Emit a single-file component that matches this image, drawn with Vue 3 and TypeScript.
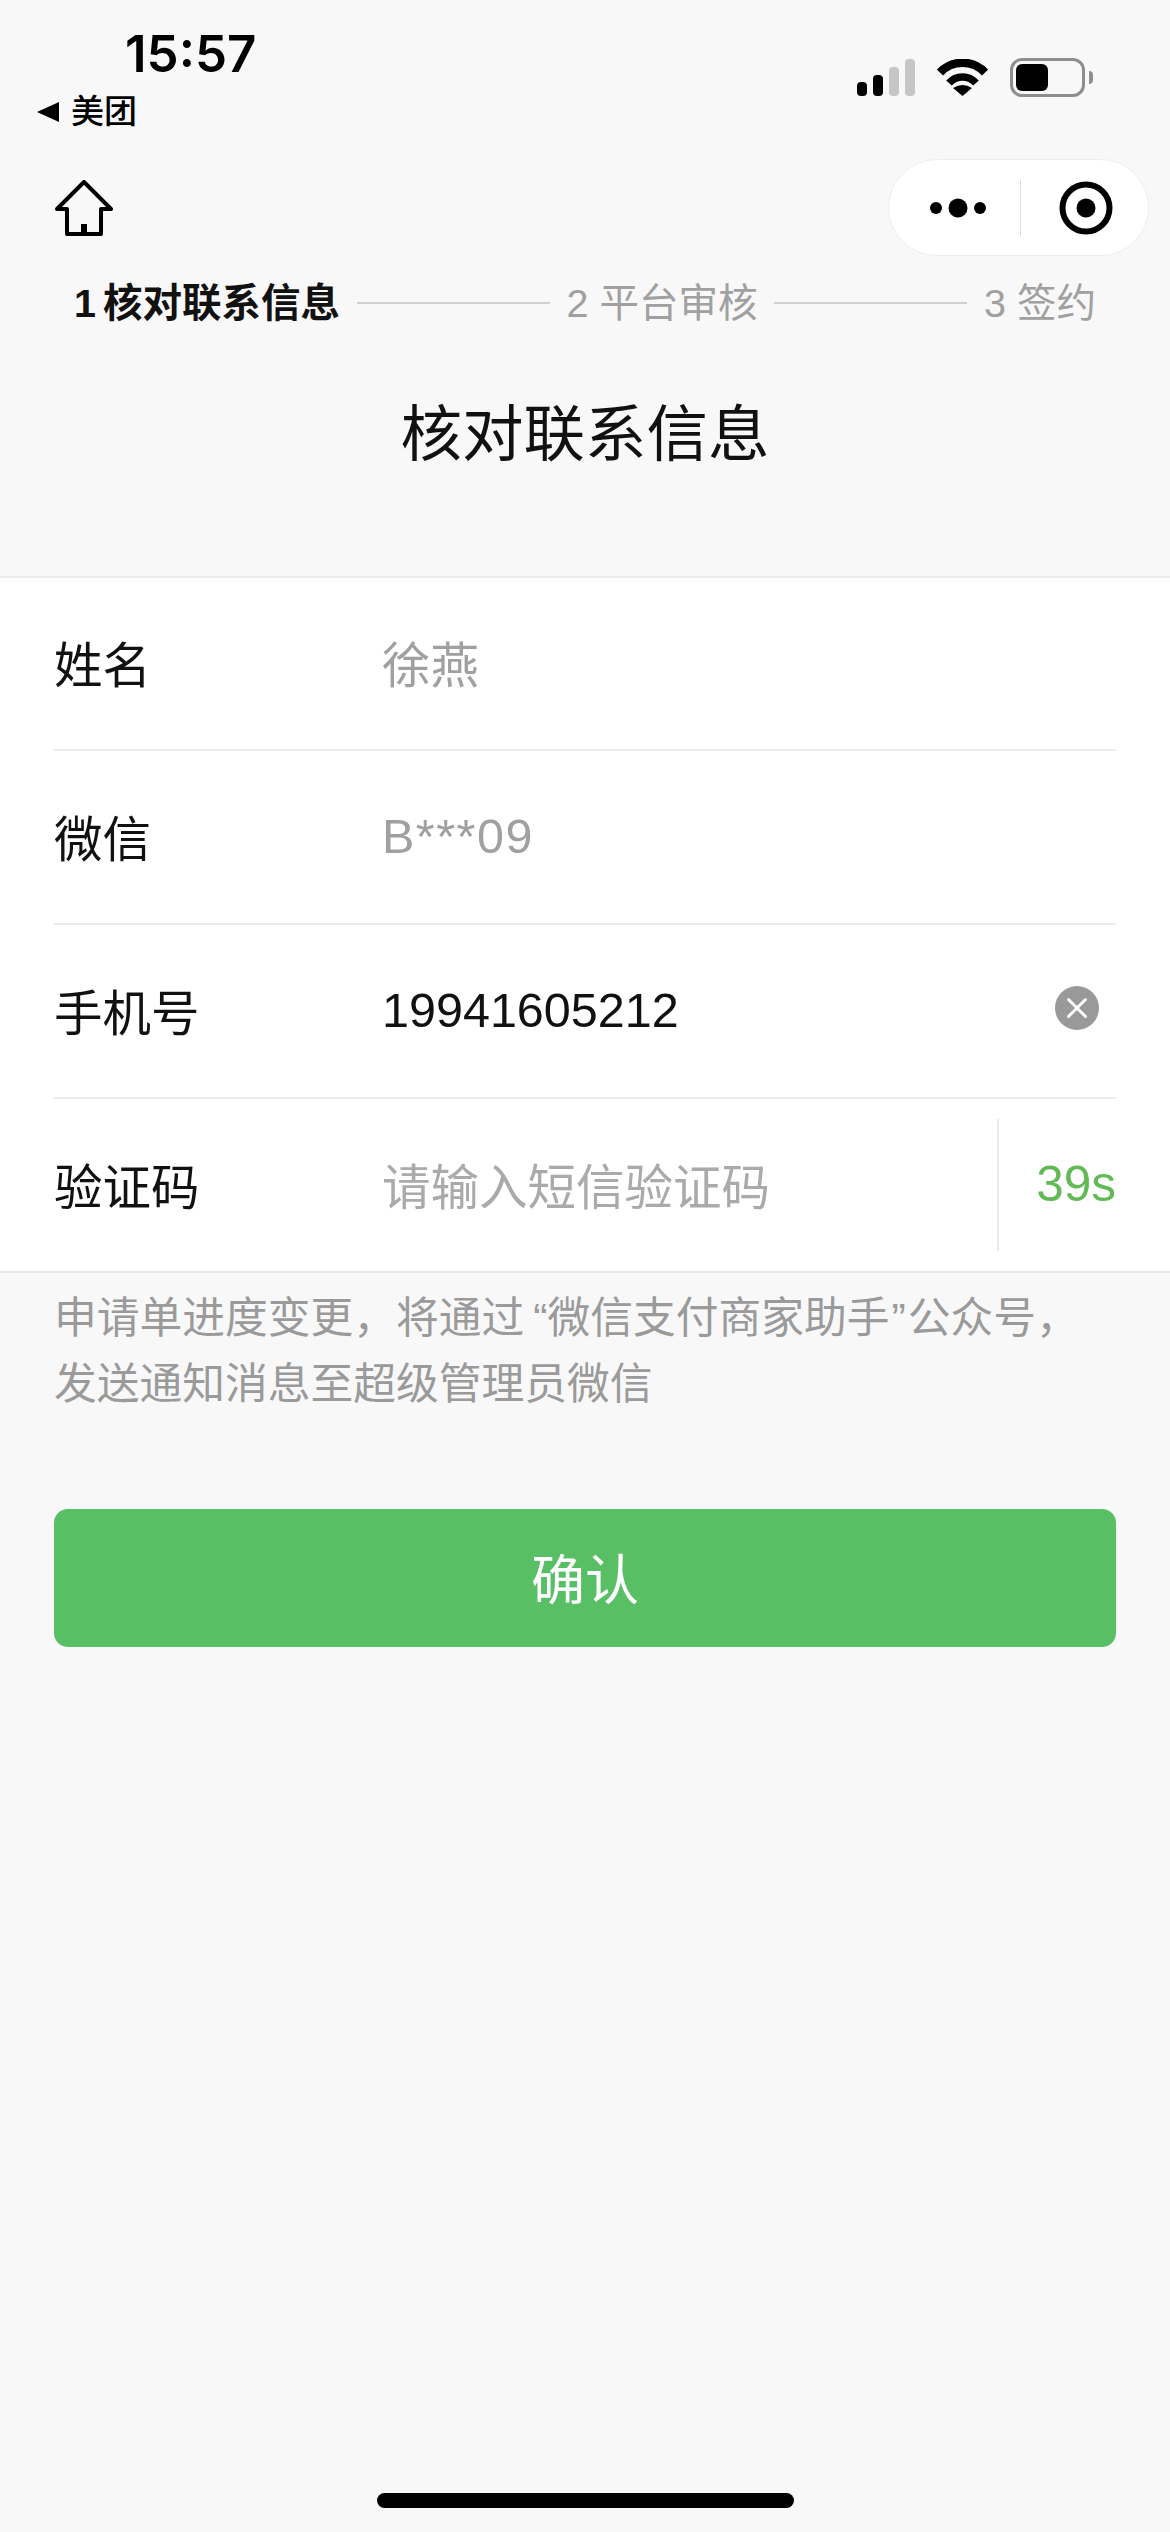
<script setup lang="ts">
interface Step { label: string; active?: boolean }
const steps: Step[] = [
  { label: '1 核对联系信息', active: true },
  { label: '2 平台审核' },
  { label: '3 签约' },
]
</script>

<template>
  <div class="page">
    <header class="status">
      <div class="status-left">
        <div class="time">15:57</div>
        <div class="back"><i class="back-arrow"></i><span>美团</span></div>
      </div>
      <div class="status-right">
        <svg class="signal" width="58" height="37" viewBox="0 0 58 37">
          <rect x="0" y="23" width="10" height="14" rx="4" fill="#000" />
          <rect x="16" y="16" width="10" height="21" rx="4" fill="#000" />
          <rect x="32" y="8" width="10" height="29" rx="4" fill="#c6c6c6" />
          <rect x="48" y="0" width="10" height="37" rx="4" fill="#c6c6c6" />
        </svg>
        <svg class="wifi" width="51" height="37" viewBox="0 0 51 37">
          <path d="M3 13.5 A31 31 0 0 1 48 13.5" fill="none" stroke="#000" stroke-width="8.5" />
          <path d="M12 24 A18 18 0 0 1 39 24" fill="none" stroke="#000" stroke-width="7.5" />
          <path d="M16 29 Q25.5 23 35 29 L25.5 37 Z" fill="#000" />
        </svg>
        <div class="battery"><div class="battery-fill"></div></div>
        <i class="battery-tip"></i>
      </div>
    </header>

    <nav class="nav">
      <svg class="home" width="58" height="56" viewBox="0 0 58 56">
        <path
          d="M29 2 L56 29 H46 V54 H12 V29 H2 Z"
          fill="none"
          stroke="#000"
          stroke-width="4"
          stroke-linejoin="round"
        />
        <rect x="26" y="44" width="6" height="10" fill="#000" />
      </svg>
      <div class="capsule">
        <svg width="56" height="20" viewBox="0 0 56 20" class="more">
          <circle cx="6" cy="10" r="6" fill="#000" />
          <circle cx="28" cy="10" r="9.5" fill="#000" />
          <circle cx="50" cy="10" r="6" fill="#000" />
        </svg>
        <i class="capsule-divider"></i>
        <svg width="54" height="54" viewBox="0 0 54 54" class="target">
          <circle cx="27" cy="27" r="23.5" fill="none" stroke="#000" stroke-width="6" />
          <circle cx="27" cy="27" r="9.5" fill="#000" />
        </svg>
      </div>
    </nav>

    <div class="steps">
      <template v-for="(step, i) in steps" :key="step.label">
        <span class="step" :class="{ active: step.active }">{{ step.label }}</span>
        <i v-if="i < steps.length - 1" class="step-line"></i>
      </template>
    </div>

    <h1 class="title">核对联系信息</h1>

    <section class="panel">
      <div class="row first">
        <span class="label">姓名</span>
        <span class="value muted">徐燕</span>
      </div>
      <div class="row">
        <span class="label">微信</span>
        <span class="value muted wechat">B***09</span>
      </div>
      <div class="row">
        <span class="label">手机号</span>
        <span class="value">19941605212</span>
        <svg class="clear" width="44" height="44" viewBox="0 0 44 44">
          <circle cx="22" cy="22" r="22" fill="#999" />
          <path d="M13.5 13.5 L30.5 30.5 M30.5 13.5 L13.5 30.5" stroke="#fff" stroke-width="3" stroke-linecap="round" />
        </svg>
      </div>
      <div class="row last">
        <span class="label">验证码</span>
        <span class="value placeholder">请输入短信验证码</span>
        <i class="row-divider"></i>
        <span class="code">39s</span>
      </div>
    </section>

    <p class="note">申请单进度变更，将通过<span class="quote-open">“</span>微信支付商家助手<span class="quote-close">”</span>公众号，<br />发送通知消息至超级管理员微信</p>

    <button class="confirm" type="button">确认</button>

    <div class="indicator"></div>
  </div>
</template>

<style scoped>
.page {
  width: 1170px;
  height: 2532px;
  display: flex;
  flex-direction: column;
  background: #f8f8f8;
  color: #111;
  font-family: "Liberation Sans", "Noto Sans CJK SC", sans-serif;
  overflow: hidden;
}
.status {
  height: 159px;
  flex: none;
  display: flex;
  justify-content: space-between;
  align-items: flex-start;
  padding-left: 37px;
  padding-right: 77px;
  box-sizing: border-box;
}
.status-left {
  display: flex;
  flex-direction: column;
}
.time {
  font-family: Inter, sans-serif;
  font-size: 51px;
  font-weight: 600;
  line-height: 50px;
  margin-top: 29px;
  margin-left: 88px;
  color: #000;
}
.back {
  display: flex;
  align-items: center;
  gap: 12px;
  margin-top: 15px;
  font-size: 33px;
  line-height: 36px;
  font-weight: 500;
  color: #000;
}
.back-arrow {
  width: 0;
  height: 0;
  border-top: 10px solid transparent;
  border-bottom: 10px solid transparent;
  border-right: 22px solid #000;
}
.status-right {
  display: flex;
  align-items: center;
  margin-top: 58px;
}
.signal { margin-right: 22px; }
.wifi { margin-right: 22px; }
.battery {
  width: 75px;
  height: 39px;
  box-sizing: border-box;
  border: 3px solid #8e8e8e;
  border-radius: 12px;
  padding: 3px;
}
.battery-fill {
  width: 32px;
  height: 100%;
  background: #000;
  border-radius: 6px;
}
.battery-tip {
  width: 4px;
  height: 13px;
  margin-left: 4px;
  background: #8e8e8e;
  border-radius: 0 4px 4px 0;
}
.nav {
  height: 97px;
  flex: none;
  display: flex;
  justify-content: space-between;
  align-items: center;
  padding-left: 55px;
  padding-right: 21px;
}
.capsule {
  width: 261px;
  height: 97px;
  box-sizing: border-box;
  background: #fff;
  border: 1px solid #eee;
  border-radius: 49px;
  display: flex;
  align-items: center;
  padding-left: 41px;
}
.capsule-divider {
  width: 1px;
  height: 56px;
  background: #ddd;
  margin-left: 34px;
}
.target { margin-left: 38px; }
.steps {
  display: flex;
  align-items: center;
  gap: 17px;
  height: 40px;
  margin-top: 27px;
  padding-left: 74px;
  padding-right: 74px;
  flex: none;
}
.step {
  font-size: 39.5px;
  line-height: 40px;
  color: #a0a0a0;
  white-space: nowrap;
}
.step.active {
  color: #111;
  font-weight: 700;
  word-spacing: -4px;
}
.step-line {
  flex: 1;
  height: 2px;
  background: #d0d0d0;
}
.title {
  margin: 82px 0 0;
  height: 60px;
  font-size: 61.5px;
  line-height: 60px;
  font-weight: 400;
  text-align: center;
  color: #111;
  flex: none;
}
.panel {
  margin-top: 111px;
  background: #fff;
  border-top: 2px solid #ececec;
  border-bottom: 2px solid #e8e8e8;
  padding: 0 54px;
  flex: none;
}
.row {
  height: 174px;
  box-sizing: border-box;
  display: flex;
  align-items: center;
  padding-bottom: 3px;
  border-bottom: 2px solid #ececec;
  font-size: 48.5px;
}
.row.first {
  height: 173px;
}
.row.last {
  height: 172px;
  border-bottom: 0;
}
.label {
  width: 328px;
  flex: none;
  color: #111;
}
.muted { color: #a0a0a0; }
.wechat { letter-spacing: 1.5px; }
.placeholder { color: #aaa; }
.clear {
  margin-left: auto;
  margin-right: 17px;
  margin-bottom: 3px;
}
.row-divider {
  width: 2px;
  height: 132px;
  margin-top: 3px;
  margin-left: auto;
  background: #ececec;
}
.code {
  width: 117px;
  flex: none;
  text-align: right;
  font-size: 49.5px;
  color: #62b956;
}
.note {
  margin: 12px 0 0;
  padding: 0 54px;
  font-size: 42.75px;
  line-height: 66px;
  color: #9a9a9a;
  flex: none;
}
.quote-open { margin-left: 9px; }
.quote-close { margin: 0 2px; }
.confirm {
  display: block;
  margin: 92px 54px 0;
  height: 138px;
  flex: none;
  border: 0;
  border-radius: 14px;
  background: #59bf65;
  color: #fff;
  font-family: inherit;
  font-size: 54px;
  padding: 0 0 4px;
}
.indicator {
  margin: auto auto 24px;
  width: 417px;
  height: 15px;
  border-radius: 8px;
  background: #000;
  flex: none;
}
</style>
